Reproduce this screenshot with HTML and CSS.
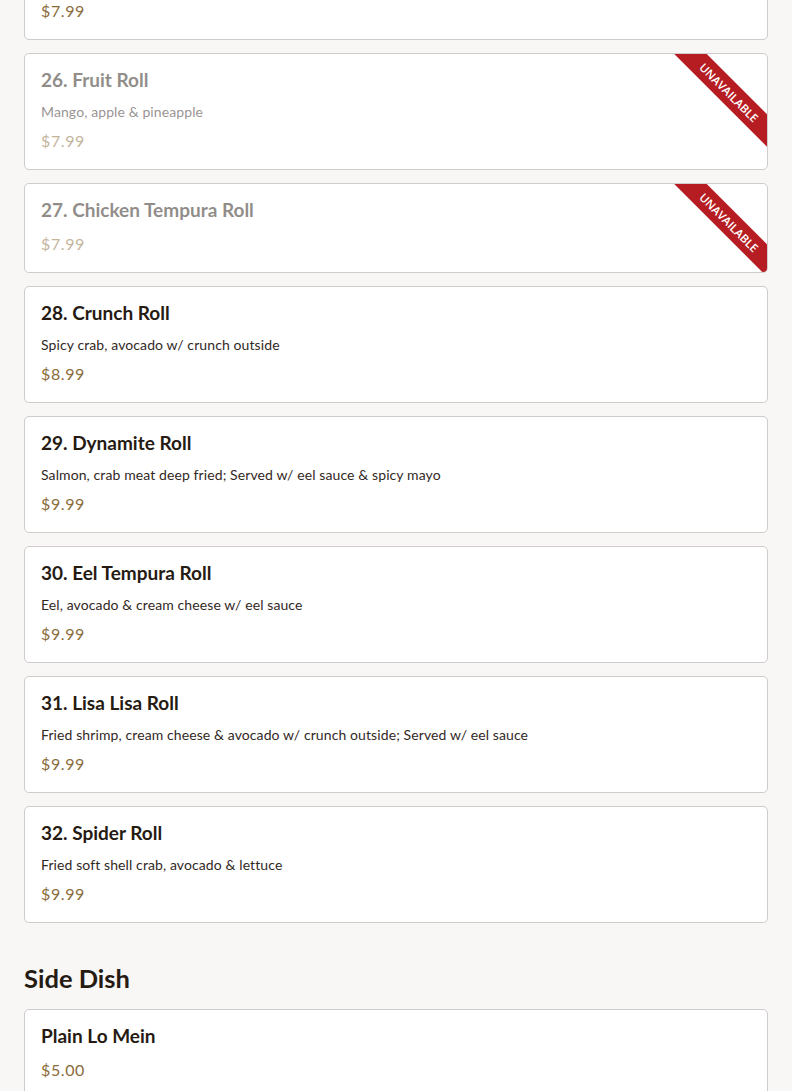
FILE: index.html
```html
<!DOCTYPE html>
<html lang="en">
<head>
<meta charset="utf-8">
<title>Menu</title>
<link rel="stylesheet" href="styles.css">
</head>
<body>
<main class="menu">
  <section class="section">
    <div class="items">
      <article class="item">
        <h3 class="item-name">25. Philadelphia Roll</h3>
        <p class="item-desc">Salmon, cream cheese &amp; avocado</p>
        <p class="item-price">$7.99</p>
      </article>
      <article class="item unavailable">
        <div class="item-body">
          <h3 class="item-name">26. Fruit Roll</h3>
          <p class="item-desc">Mango, apple &amp; pineapple</p>
          <p class="item-price">$7.99</p>
        </div>
        <span class="ribbon">Unavailable</span>
      </article>
      <article class="item unavailable">
        <div class="item-body">
          <h3 class="item-name">27. Chicken Tempura Roll</h3>
          <p class="item-price">$7.99</p>
        </div>
        <span class="ribbon">Unavailable</span>
      </article>
      <article class="item">
        <h3 class="item-name">28. Crunch Roll</h3>
        <p class="item-desc">Spicy crab, avocado w/ crunch outside</p>
        <p class="item-price">$8.99</p>
      </article>
      <article class="item">
        <h3 class="item-name">29. Dynamite Roll</h3>
        <p class="item-desc">Salmon, crab meat deep fried; Served w/ eel sauce &amp; spicy mayo</p>
        <p class="item-price">$9.99</p>
      </article>
      <article class="item">
        <h3 class="item-name">30. Eel Tempura Roll</h3>
        <p class="item-desc">Eel, avocado &amp; cream cheese w/ eel sauce</p>
        <p class="item-price">$9.99</p>
      </article>
      <article class="item">
        <h3 class="item-name">31. Lisa Lisa Roll</h3>
        <p class="item-desc">Fried shrimp, cream cheese &amp; avocado w/ crunch outside; Served w/ eel sauce</p>
        <p class="item-price">$9.99</p>
      </article>
      <article class="item">
        <h3 class="item-name">32. Spider Roll</h3>
        <p class="item-desc">Fried soft shell crab, avocado &amp; lettuce</p>
        <p class="item-price">$9.99</p>
      </article>
    </div>
  </section>
  <section class="section">
    <h2 class="section-title">Side Dish</h2>
    <div class="items">
      <article class="item">
        <h3 class="item-name">Plain Lo Mein</h3>
        <p class="item-price">$5.00</p>
      </article>
      <article class="item">
        <h3 class="item-name">Fried Rice</h3>
        <p class="item-price">$5.00</p>
      </article>
    </div>
  </section>
</main>
</body>
</html>
```

FILE: styles.css
```css
html, body {
  margin: 0;
  padding: 0;
}
body {
  background: #f8f7f5;
  font-family: "Lato", "Open Sans", "DejaVu Sans", sans-serif;
  color: #231a14;
  overflow: hidden;
}
.menu {
  margin-top: -77px;
  padding: 0 24px;
}
.section-title {
  margin: 39px 0 15px;
  font-size: 25.5px;
  line-height: 32px;
  font-weight: 700;
  color: #261b13;
}
.items {
  display: flex;
  flex-direction: column;
  gap: 13px;
}
.item {
  position: relative;
  overflow: hidden;
  background: #ffffff;
  border: 1px solid #cfcccb;
  border-radius: 5px;
  padding: 16px;
}
.item-name {
  margin: 0 0 12px;
  font-size: 19px;
  line-height: 20px;
  font-weight: 700;
  color: #261b13;
}
.item-desc {
  margin: 0 0 7px;
  font-size: 14px;
  line-height: 20px;
  letter-spacing: 0.1px;
  color: #33291f;
}
.item-price {
  margin: 0;
  font-size: 16px;
  line-height: 24px;
  letter-spacing: 0.6px;
  color: #8a6c3a;
}
.unavailable .item-body {
  opacity: 0.5;
}
.ribbon {
  position: absolute;
  top: 27px;
  right: -37px;
  width: 150px;
  line-height: 23px;
  transform: rotate(45deg);
  text-align: center;
  background: #b51d22;
  color: #ffffff;
  font-family: "Open Sans", "Liberation Sans", Arial, sans-serif;
  font-size: 11.5px;
  font-weight: 600;
  text-transform: uppercase;
}
```
